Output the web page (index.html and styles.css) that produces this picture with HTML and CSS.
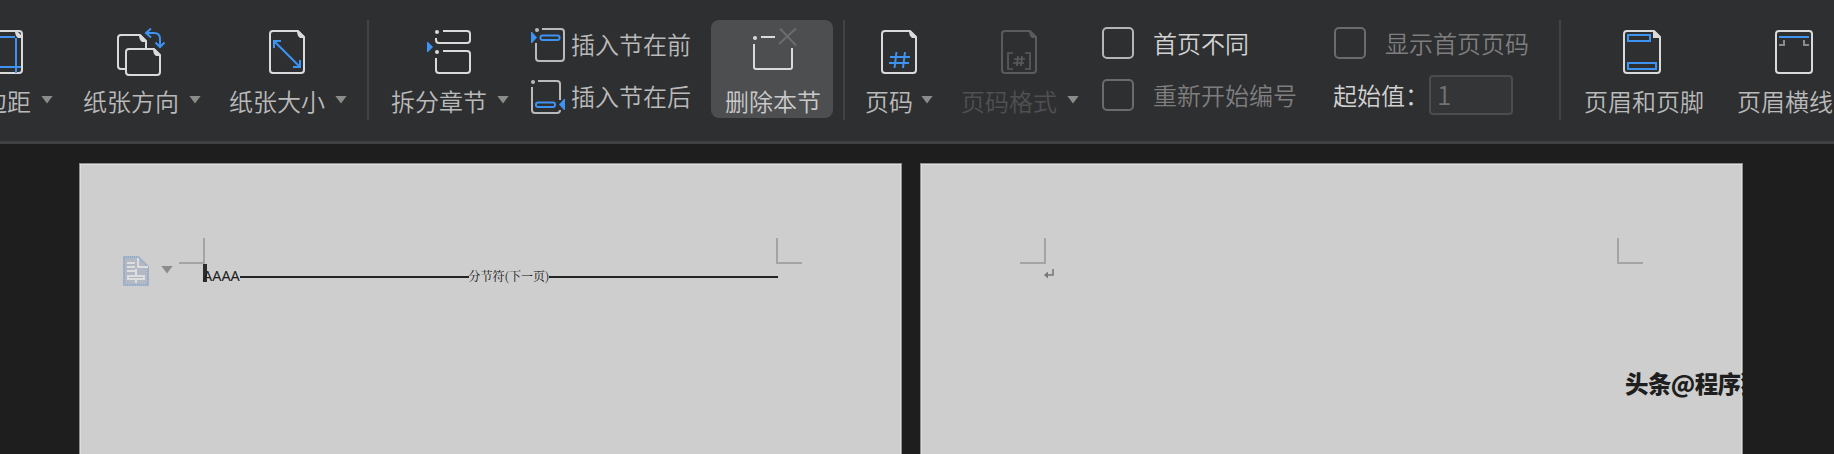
FILE: index.html
```
<!DOCTYPE html>
<html lang="zh-CN">
<head>
<meta charset="utf-8">
<title>章节</title>
<link rel="stylesheet" href="styles.css">
</head>
<body>
<header class="toolbar">
  <div class="tool margins">
    <svg class="icon" width="44" height="44" viewBox="0 0 44 44"><rect x="5" y="1" width="38" height="42" rx="3" class="w"/><path d="M36 1h2l5 5v2h-4q-3-2-3-7z" class="wf"/><path d="M4 7h32M37 8v35M4 37h38" class="b"/></svg>
    <div class="label">页边距<i class="caret"></i></div>
  </div>
  <div class="tool direction">
    <svg class="icon tall" width="48" height="48" viewBox="0 0 48 48"><path d="M10 41H4q-3 0-3-3V10q0-3 3-3h19l6 6v8" class="w"/><path d="M22 7h2l5 5v2h-4q-3-2-3-7z" class="wf"/><path d="M12 21h25l6 6v17q0 3-3 3H12q-3 0-3-3V24q0-3 3-3z" class="w"/><path d="M36 21h2l5 5v2h-4q-3-2-3-7z" class="wf"/><path d="M34 .5L29 5l5 4.500M29 5h8q6 0 6 6v8M38.500 14.500L43 19l4.500-4.500" class="b"/></svg>
    <div class="label">纸张方向<i class="caret"></i></div>
  </div>
  <div class="tool size">
    <svg class="icon" width="36" height="44" viewBox="0 0 36 44"><path d="M4 1h25l6 6v33q0 3-3 3H4q-3 0-3-3V4q0-3 3-3z" class="w"/><path d="M28 1h2l5 5v2h-4q-3-2-3-7z" class="wf"/><path d="M5 18v-7h7M5 11l26 26M31 30v7h-7" class="b"/></svg>
    <div class="label">纸张大小<i class="caret"></i></div>
  </div>
  <div class="sep s1"></div>
  <div class="tool split">
    <svg class="icon" width="44" height="44" viewBox="0 0 44 44"><path d="M16 1h24q3 0 3 3v6q0 3-3 3H12q-3 0-3-3V8M16 21h24q3 0 3 3v16q0 3-3 3H12q-3 0-3-3V28" class="w"/><circle cx="10" cy="2" r="2" class="wf"/><circle cx="10" cy="22" r="2" class="wf"/><path d="M0 12h1l5 5-5 5H0z" class="bf"/></svg>
    <div class="label">拆分章节<i class="caret"></i></div>
  </div>
  <div class="stack">
    <div class="inline">
      <svg width="34" height="34" viewBox="0 0 34 34"><path d="M11 1h19q3 0 3 3v26q0 3-3 3H8q-3 0-3-3V15" class="g"/><circle cx="6" cy="2" r="2" class="gf"/><rect x="9.500" y="7.500" width="19" height="4.500" rx="2" class="b"/><path d="M0 4h1l5 5.500-5 5.500H0z" class="bf"/></svg>
      <span>插入节在前</span>
    </div>
    <div class="inline">
      <svg width="34" height="34" viewBox="0 0 34 34"><path d="M7 1h19q3 0 3 3v16M29 30q0 3-3 3H4q-3 0-3-3V7" class="g"/><circle cx="2" cy="2" r="2" class="gf"/><rect x="5" y="22.500" width="19" height="4.500" rx="2" class="b"/><path d="M34 19h-1l-5 5.500 5 5.500h1z" class="bf"/></svg>
      <span>插入节在后</span>
    </div>
  </div>
  <div class="active">
    <svg width="44" height="42" viewBox="0 0 44 42"><path d="M1 16v23q0 2 2 2h34q2 0 2-2V20M8 9h14" class="w"/><circle cx="2" cy="10" r="2" class="wf"/><path d="M27 .5l16 17M43 .5L26 16" class="x"/></svg>
    <div class="label">删除本节</div>
  </div>
  <div class="sep s2"></div>
  <div class="tool number">
    <svg class="icon" width="36" height="44" viewBox="0 0 36 44"><path d="M4 1h25l6 6v33q0 3-3 3H4q-3 0-3-3V4q0-3 3-3z" class="w"/><path d="M28 1h2l5 5v2h-4q-3-2-3-7z" class="wf"/><path d="M9 27h20M8 33h20M15.500 22l-2 16M24 22l-2 16" class="b"/></svg>
    <div class="label">页码<i class="caret"></i></div>
  </div>
  <div class="tool format">
    <svg class="icon" width="36" height="44" viewBox="0 0 36 44"><path d="M4 1h25l6 6v33q0 3-3 3H4q-3 0-3-3V4q0-3 3-3z" class="d"/><path d="M28 1h2l5 5v2h-4q-3-2-3-7z" class="df"/><path d="M12 23H7v16h5M24 23h5v16h-5M13 29h11M12 33h11M17 26l-1 10M21 26l-1 10" class="d thin"/></svg>
    <div class="label"><span class="disabled">页码格式</span><i class="caret"></i></div>
  </div>
  <div class="options">
    <div class="option"><i class="check on"></i><span class="bright">首页不同</span></div>
    <div class="option"><i class="check"></i><span class="muted">重新开始编号</span></div>
  </div>
  <div class="options second">
    <div class="option"><i class="check"></i><span class="muted">显示首页页码</span></div>
    <div class="option"><span class="bright start">起始值：</span><span class="field">1</span></div>
  </div>
  <div class="sep s3"></div>
  <div class="tool header">
    <svg class="icon" width="38" height="44" viewBox="0 0 38 44"><path d="M4 1h27l6 6v33q0 3-3 3H4q-3 0-3-3V4q0-3 3-3z" class="w"/><path d="M30 1h2l5 5v2h-7z" class="wf"/><path d="M5 5h22v6H5zM5 33h28v6H5z" class="b"/></svg>
    <div class="label">页眉和页脚</div>
  </div>
  <div class="tool rule">
    <svg class="icon" width="38" height="44" viewBox="0 0 38 44"><rect x="1" y="1" width="36" height="42" rx="3" class="w"/><path d="M4 7h30" class="b"/><path d="M4 15h5v-5M34 15h-5v-5" class="m"/></svg>
    <div class="label">页眉横线</div>
  </div>
</header>
<main class="workspace">
  <section class="page">
    <div class="corners"><i class="corner left"></i><i class="corner right"></i></div>
    <div class="line">
      <i class="cursor"></i><span class="typed">AAAA</span><i class="stroke"></i><span class="break">分节符(下一页)</span><i class="stroke"></i>
    </div>
    <div class="paste">
      <svg width="26" height="30" viewBox="0 0 26 30"><path d="M0 0h16l10 10v20H0z" fill="#b3b9c3"/><path d="M1 1h14l10 10v18H1z" fill="none" stroke="#5f9ce0" stroke-dasharray="1 1"/><path d="M15 2v9h10M4 7h8M4 11h8M4 15h8M5 20h16v3H5zM13 13v6M13 23v4" fill="none" stroke="#dedede" stroke-width="2"/></svg>
      <i class="caret small"></i>
    </div>
  </section>
  <section class="page">
    <div class="corners"><i class="corner left"></i><i class="corner right"></i></div>
    <svg class="return" width="10" height="10" viewBox="0 0 10 10"><path d="M9 0v6H3" fill="none" stroke="#777" stroke-width="1.500"/><path d="M0 6l4-3.500v7z" fill="#777"/></svg>
  </section>
  <div class="watermark">头条@程序猿</div>
</main>
</body>
</html>
```
FILE: styles.css
```
* { box-sizing: border-box; }
body {
  margin: 0;
  width: 1834px;
  height: 454px;
  overflow: hidden;
  background: #1e1e1e;
  font-family: "Noto Sans CJK SC", sans-serif;
}
svg { display: block; fill: none; flex: none; }
.toolbar {
  display: flex;
  align-items: flex-start;
  height: 144px;
  padding-top: 20px;
  overflow: hidden;
  background: #2e2f31;
  border-bottom: 3px solid #414144;
  color: #bababa;
  font-size: 24px;
  font-weight: 350;
  line-height: 32px;
  white-space: nowrap;
}
.toolbar > * { flex: none; }
.tool {
  display: flex;
  flex-direction: column;
  align-items: center;
  padding-top: 10px;
}
.icon { margin-bottom: 11px; }
.icon.tall { margin-top: -2px; margin-bottom: 9px; }
.direction .icon { margin-right: 2px; }
.size .icon { margin-right: 2px; }
.label { display: flex; align-items: center; }
.caret {
  width: 12px;
  height: 8px;
  margin: -3px 0 0 10px;
  background: #8b8b8a;
  clip-path: polygon(0 0, 100% 0, 50% 100%);
}
.w { stroke: #dadada; stroke-width: 2; }
.wf { fill: #dadada; }
.g { stroke: #bababa; stroke-width: 2; }
.gf { fill: #bababa; }
.b { stroke: #3d92f2; stroke-width: 2; }
.bf { fill: #3d92f2; }
.x { stroke: #6c6c6d; stroke-width: 2; }
.m { stroke: #8b8b8b; stroke-width: 2; }
.d { stroke: #5b5b5c; stroke-width: 2; }
.df { fill: #5b5b5c; }
.thin { stroke-width: 1.7; }
.margins { margin-left: -41px; }
.margins .icon { margin-left: -10px; }
.direction { margin-left: 30px; }
.size { margin-left: 28px; }
.split { margin-left: 22px; }
.split .icon { margin-right: 2px; }
.number { margin-left: 20px; }
.number .caret { margin-left: 8px; }
.format { margin-left: 28px; }
.format .icon { margin-right: 2px; }
.header { margin-left: 23px; }
.header .icon { margin-right: 5px; }
.rule { margin-left: 33px; }
.rule .icon { margin-left: 18px; }
.sep { width: 2px; height: 100px; background: #434345; }
.s1 { margin-left: 20px; }
.s2 { margin-left: 10px; }
.s3 { margin-left: 29px; }
.stack {
  display: flex;
  flex-direction: column;
  gap: 18px;
  margin-left: 22px;
  padding-top: 8px;
}
.inline { display: flex; align-items: center; gap: 6px; height: 34px; }
.inline span { margin: -3px 1px 0 0; }
.active {
  display: flex;
  flex-direction: column;
  align-items: center;
  gap: 15px;
  width: 122px;
  height: 98px;
  margin-left: 19px;
  padding-top: 8px;
  background: #4d4e50;
  border-radius: 8px;
}
.active svg { margin-left: 6px; }
.active .label { margin-left: 2px; color: #cacaca; }
.disabled { color: #505052; }
.options {
  display: grid;
  gap: 20px;
  margin-left: 23px;
  padding-top: 7px;
}
.options.second { margin-left: 36px; }
.option { display: flex; align-items: center; gap: 20px; height: 32px; }
.option .muted, .option .bright { margin-left: -1px; margin-right: 1px; }
.check { width: 32px; height: 32px; border: 2px solid #6b6b6c; border-radius: 5px; }
.check.on { border-color: #b5b5b5; }
.bright { color: #d2d2d2; }
.muted { color: #7e7e7f; }
.option .start { width: 76px; margin: 0 0 0 -1px; }
.field {
  width: 84px;
  height: 40px;
  padding-left: 6px;
  border: 2px solid #4c4c4e;
  border-radius: 4px;
  background: #343537;
  color: #727273;
  font-size: 26px;
  line-height: 34px;
}
.workspace {
  display: flex;
  gap: 18px;
  height: 310px;
  padding: 19px 0 0 79px;
  position: relative;
}
.page {
  position: relative;
  flex: none;
  width: 823px;
  height: 300px;
  padding: 74px 99px 0;
  background: #cecece;
  border: 1px solid #8e8e8e;
  box-shadow: inset 0 0 0 1px #dedede;
}
.corners { display: flex; justify-content: space-between; }
.corner { width: 26px; height: 26px; border: 0 solid #a4a4a4; }
.corner.left { border-width: 0 2px 2px 0; }
.corner.right { border-width: 0 0 2px 2px; }
.line {
  display: flex;
  align-items: center;
  width: 575px;
  height: 22px;
  margin: 0 0 0 24px;
  color: #202020;
  font-size: 12px;
}
.cursor { width: 4px; height: 18px; margin: -4px -4px 0 0; background: #2c2c2c; }
.typed { font: 14.4px "Noto Sans", sans-serif; position: relative; }
.break { line-height: 16px; margin-top: 2px; color: #101010; font-family: "Noto Serif CJK SC", "Liberation Serif", "Noto Sans CJK SC", serif; }
.stroke { flex: 1; height: 2px; margin-top: 4px; background: #242424; }
.paste {
  position: absolute;
  left: 43px;
  top: 92px;
  display: flex;
  align-items: center;
}
.caret.small { width: 12px; margin: -3px 0 0 12px; }
.return { margin: 5px 0 0 24px; }
.watermark {
  position: absolute;
  left: 1625px;
  top: 222px;
  color: #1e1e1e;
  font-size: 23.5px;
  font-weight: 900;
  letter-spacing: -0.6px;
  line-height: 34px;
}
```
